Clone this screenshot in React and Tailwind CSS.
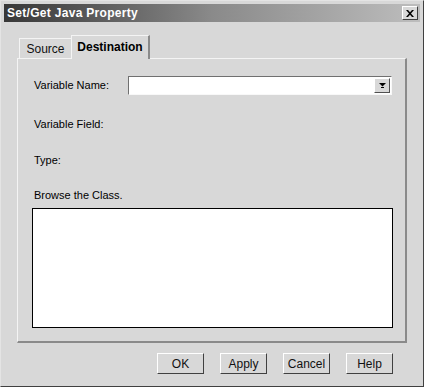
export default function App() {
  const font = { fontFamily: '"Liberation Sans", Arial, sans-serif' };
  return (
    <div
      style={font}
      className="w-[424px] h-[387px] bg-[#d8d8d8] border border-t-[#e4e4e4] border-l-[#e4e4e4] border-r-[#404040] border-b-[#404040] flex flex-col p-[3px] text-[11px] text-black"
    >
      {/* Title bar */}
      <div className="h-[18px] bg-gradient-to-r from-[#383838] via-[#8a8a8a] to-[#bdbdbd] flex items-center justify-between pl-[3px] pr-[2px]">
        <span className="text-white font-bold text-[12px] tracking-[0.3px] leading-none">Set/Get Java Property</span>
        <div className="w-[16px] h-[14px] bg-[#d8d8d8] border border-t-white border-l-white border-r-[#404040] border-b-[#404040] flex items-center justify-center">
          <svg width="8" height="7" viewBox="0 0 8 7">
            <path d="M0 0 L2 0 L4 2.2 L6 0 L8 0 L5 3.5 L8 7 L6 7 L4 4.8 L2 7 L0 7 L3 3.5 Z" fill="#000" />
          </svg>
        </div>
      </div>

      {/* Tabs */}
      <div className="mt-[13px] pl-[15px] flex items-end h-[23px] relative z-10">
        <div className="w-[52px] h-[20px] border-t border-l border-[#f4f4f4] flex items-center justify-center text-[12px] text-[#111] pt-[1px]">
          Source
        </div>
        <div className="w-[79px] h-[24px] mb-[-1px] bg-[#d8d8d8] border-t border-l border-[#f4f4f4] border-r-2 border-r-[#8a8a8a] flex items-start justify-center pt-[2px] font-bold text-[12px]">
          Destination
        </div>
      </div>

      {/* Panel */}
      <div className="ml-[13px] w-[390px] h-[285px] border-t border-l border-[#f4f4f4] border-r-2 border-b-2 border-r-[#8a8a8a] border-b-[#8a8a8a] flex flex-col pl-[16px] pt-[17px]">
        <div className="flex items-center h-[19px]">
          <span className="w-[94px]">Variable Name:</span>
          <div className="w-[264px] h-[19px] bg-white border border-t-[#707070] border-l-[#707070] border-r-[#f8f8f8] border-b-[#f8f8f8] flex justify-end p-[1px]">
            <div className="w-[16px] h-full bg-[#d8d8d8] border border-t-white border-l-white border-r-[#505050] border-b-[#505050] flex items-center justify-center">
              <svg width="7" height="5" viewBox="0 0 7 5">
                <path d="M0 0 L7 0 L3.5 3.5 Z" fill="#000" />
                <rect x="2" y="4" width="3" height="1" fill="#000" />
              </svg>
            </div>
          </div>
        </div>
        <div className="mt-[24px] leading-none">Variable Field:</div>
        <div className="mt-[25px] leading-none">Type:</div>
        <div className="mt-[24px] leading-none">Browse the Class.</div>
        <div className="mt-[7px] ml-[-2px] w-[361px] h-[120px] bg-white border border-black" />
      </div>

      {/* Buttons */}
      <div className="flex justify-end gap-[16px] pr-[27px] mt-[10px]">
        {["OK", "Apply", "Cancel", "Help"].map((b) => (
          <button
            key={b}
            style={font}
            className="w-[47px] h-[21px] bg-[#d8d8d8] border border-t-white border-l-white border-r-[#404040] border-b-[#404040] text-[12px] text-[#111] flex items-center justify-center"
          >
            {b}
          </button>
        ))}
      </div>
    </div>
  );
}
